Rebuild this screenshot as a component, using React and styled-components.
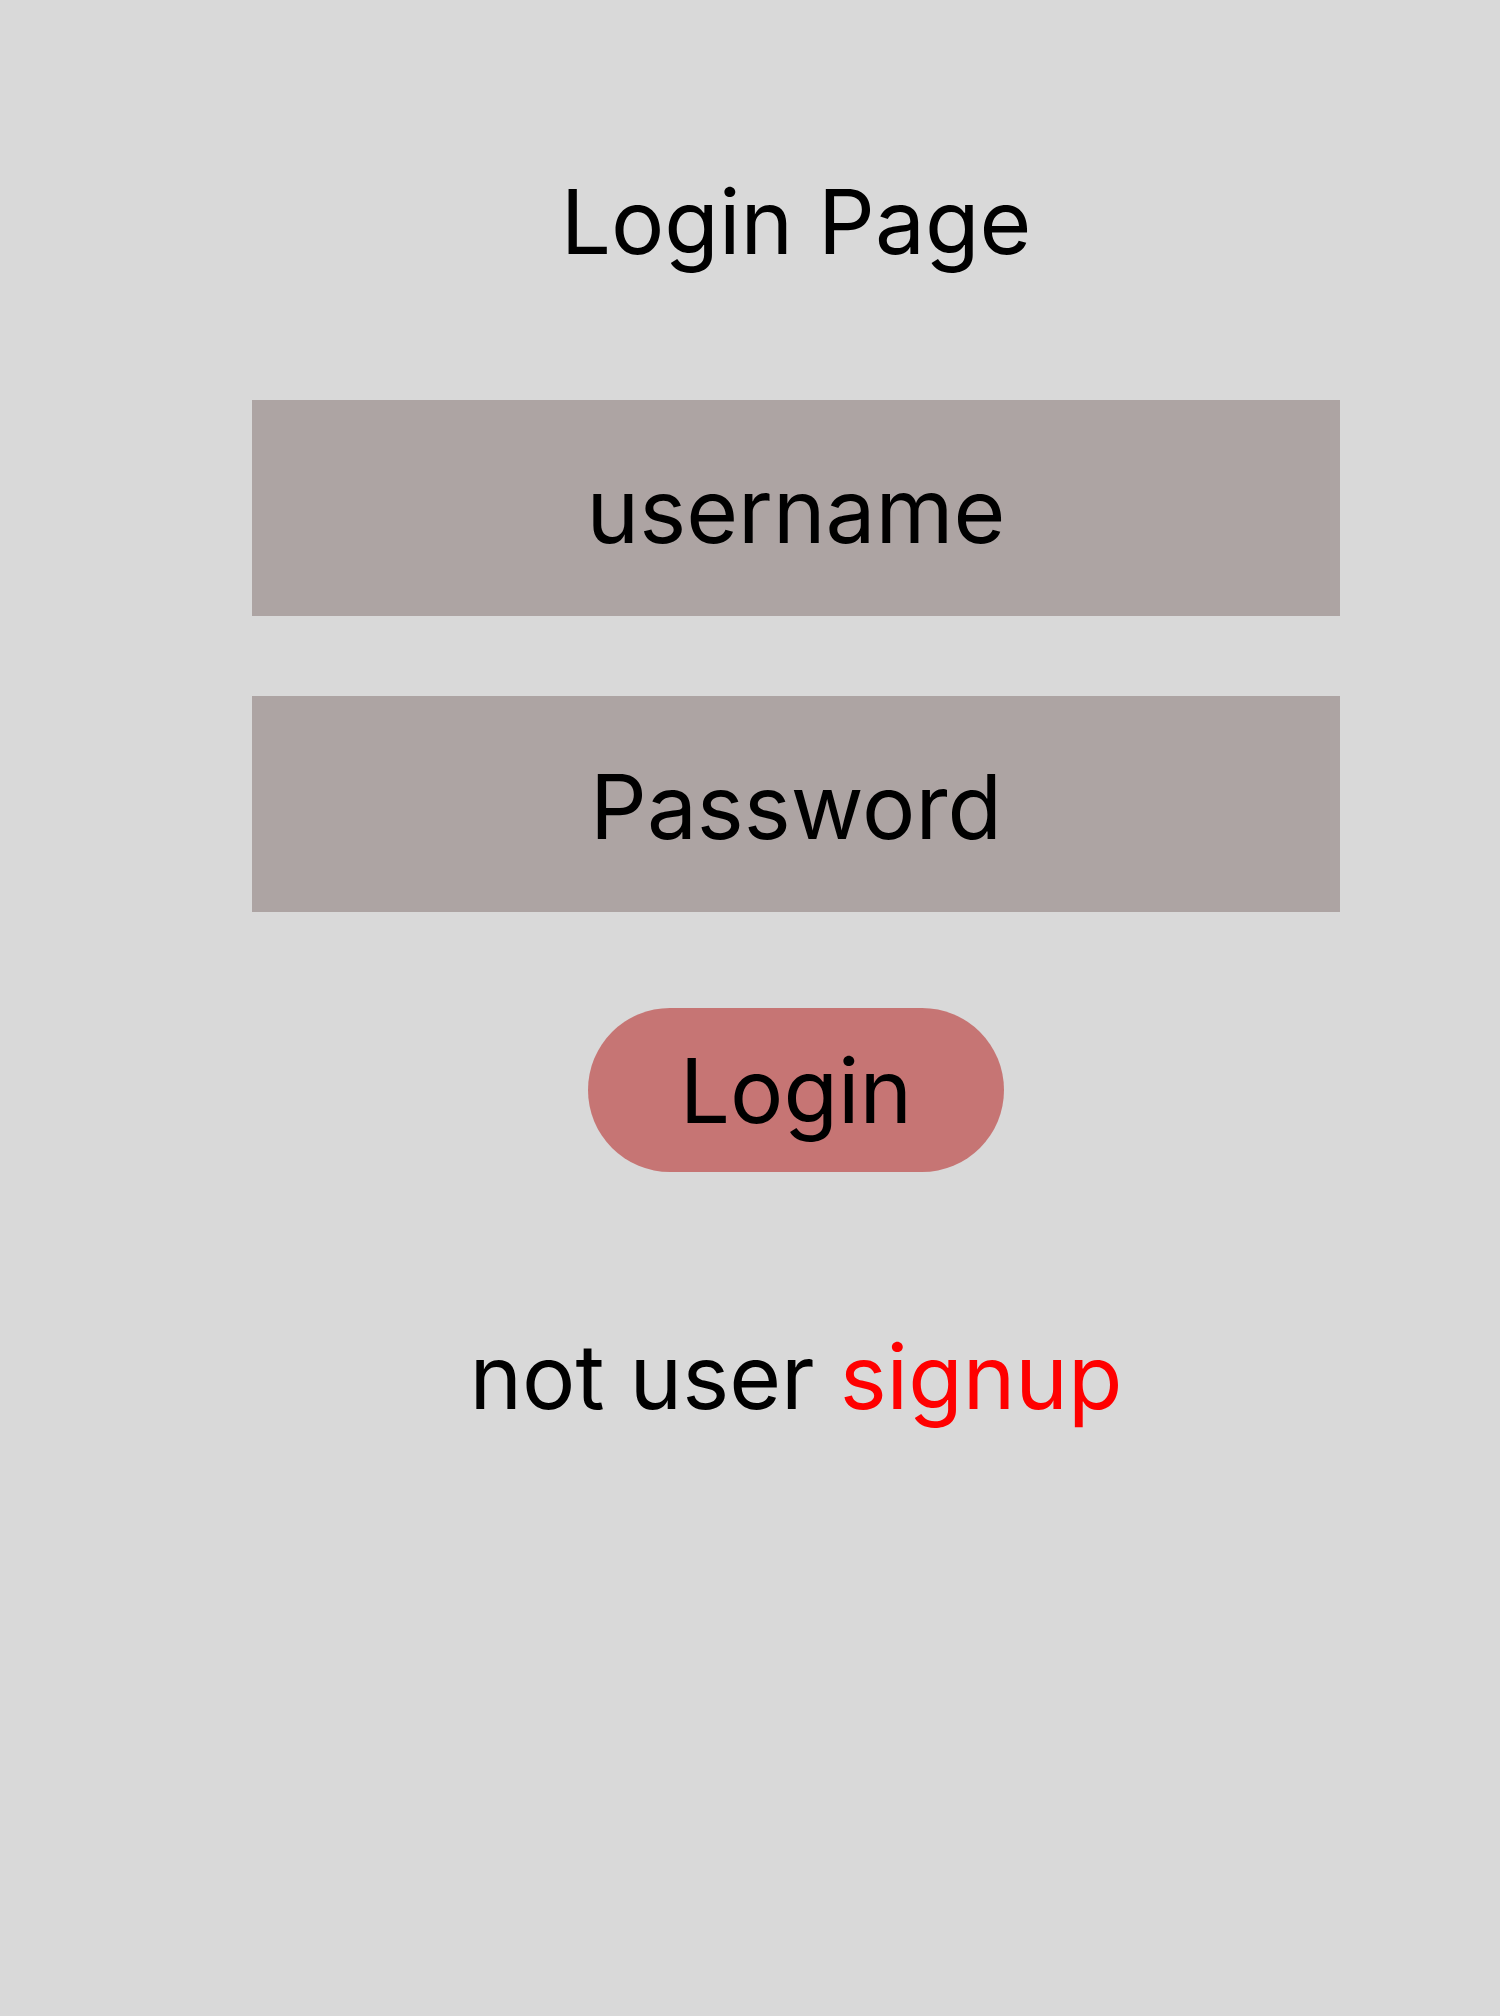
import React from "react";
import styled, { createGlobalStyle } from "styled-components";

const Global = createGlobalStyle`
  html, body { margin: 0; padding: 0; background: #d9d9d9; }
  body { font-family: Inter, "Noto Sans", sans-serif; color: #000; }
`;

const Page = styled.div`
  min-height: 2016px;
  background: #d9d9d9;
  display: flex;
  justify-content: flex-start;
  padding-left: 252px;
  box-sizing: border-box;
`;

const Column = styled.div`
  width: 1088px;
  display: flex;
  flex-direction: column;
  align-items: center;
`;

const Title = styled.h1`
  margin: 152px 0 0;
  font-size: 89px;
  font-weight: 400;
  line-height: 140px;
`;

const Field = styled.input`
  width: 100%;
  height: 216px;
  margin-top: ${(p) => p.$top}px;
  border: none;
  outline: none;
  background: #ada4a3;
  font-family: Inter, "Noto Sans", sans-serif;
  font-size: 89px;
  text-align: center;
  color: #000;
  padding: 4px 0 0;
  box-sizing: border-box;
  &::placeholder { color: #000; opacity: 1; }
`;

const Button = styled.button`
  margin-top: 96px;
  width: 416px;
  height: 164px;
  border: none;
  border-radius: 82px;
  background: #c67574;
  font-family: Inter, "Noto Sans", sans-serif;
  font-size: 89px;
  color: #000;
  padding: 0;
`;

const Footer = styled.p`
  margin: 150px 0 0;
  font-size: 89px;
  line-height: 110px;
`;

const SignupLink = styled.a`
  color: #ff0000;
  text-decoration: none;
`;

export default function App() {
  return (
    <>
      <Global />
      <Page>
        <Column>
          <Title>Login Page</Title>
          <Field $top={108} placeholder="username" />
          <Field $top={80} type="password" placeholder="Password" />
          <Button>Login</Button>
          <Footer>
            not user <SignupLink href="#">signup</SignupLink>
          </Footer>
        </Column>
      </Page>
    </>
  );
}
